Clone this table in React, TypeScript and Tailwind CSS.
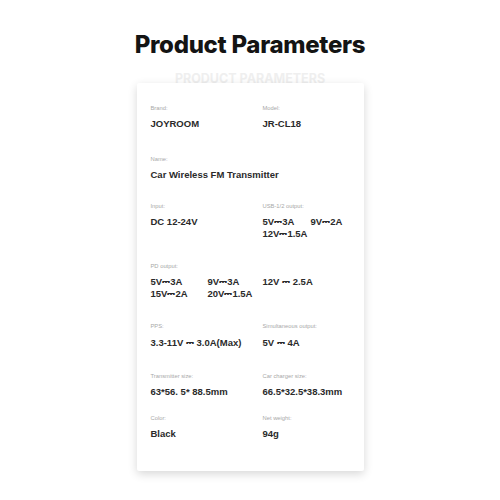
import React from "react";

const DC = "\u2393";

const Label: React.FC<{ children: React.ReactNode }> = ({ children }) => (
  <div className="text-[5.8px] leading-[8px] text-[#a8a8a8]">{children}</div>
);

const Value: React.FC<{ children: React.ReactNode; extra?: boolean }> = ({ children, extra }) => (
  <div className={`${extra ? "mt-[7px]" : "mt-[6px]"} text-[9.5px] leading-[12px] font-bold text-[#2a2a2a]`}>
    {children}
  </div>
);

const Sym = () => <span className="font-normal">{DC}</span>;

export default function App() {
  return (
    <div className="w-[500px] h-[500px] bg-white flex flex-col items-center pt-[30px] [font-family:'Liberation_Sans','DejaVu_Sans',sans-serif]">
      <h1 className="text-[24px] leading-[30px] font-extrabold tracking-[-0.3px] text-[#141414] [font-family:Inter,sans-serif]">
        Product Parameters
      </h1>
      <div className="mt-[11px] text-[12.5px] leading-[16px] font-bold text-[#efefef] [font-family:Inter,sans-serif]">
        PRODUCT PARAMETERS
      </div>
      <div className="relative z-10 -mt-[4px] w-[227px] h-[388px] bg-white rounded-[2px] shadow-[0_3px_10px_rgba(0,0,0,0.16)] pl-[14px] pt-[21px]">
        <div className="grid grid-cols-[112px_1fr]">
          <div>
            <Label>Brand:</Label>
            <Value>JOYROOM</Value>
          </div>
          <div>
            <Label>Model:</Label>
            <Value>JR-CL18</Value>
          </div>
        </div>

        <div className="mt-[25px]">
          <Label>Name:</Label>
          <Value>Car Wireless FM Transmitter</Value>
        </div>

        <div className="mt-[21px] grid grid-cols-[112px_1fr]">
          <div>
            <Label>Input:</Label>
            <Value>DC 12-24V</Value>
          </div>
          <div>
            <Label>USB-1/2 output:</Label>
            <Value>
              <span className="inline-block w-[48px]">5V<Sym />3A</span>
              <span>9V<Sym />2A</span>
              <br />
              12V<Sym />1.5A
            </Value>
          </div>
        </div>

        <div className="mt-[22px]">
          <Label>PD output:</Label>
          <Value>
            <div className="flex">
              <span className="w-[57px]">5V<Sym />3A</span>
              <span className="w-[55px]">9V<Sym />3A</span>
              <span>12V <Sym /> 2.5A</span>
            </div>
            <div className="flex">
              <span className="w-[57px]">15V<Sym />2A</span>
              <span>20V<Sym />1.5A</span>
            </div>
          </Value>
        </div>

        <div className="mt-[22px] grid grid-cols-[112px_1fr]">
          <div>
            <Label>PPS:</Label>
            <Value extra>3.3-11V <Sym /> 3.0A(Max)</Value>
          </div>
          <div>
            <Label>Simultaneous output:</Label>
            <Value extra>5V <Sym /> 4A</Value>
          </div>
        </div>

        <div className="mt-[23px] grid grid-cols-[112px_1fr]">
          <div>
            <Label>Transmitter size:</Label>
            <Value>63*56. 5* 88.5mm</Value>
          </div>
          <div>
            <Label>Car charger size:</Label>
            <Value>66.5*32.5*38.3mm</Value>
          </div>
        </div>

        <div className="mt-[16px] grid grid-cols-[112px_1fr]">
          <div>
            <Label>Color:</Label>
            <Value>Black</Value>
          </div>
          <div>
            <Label>Net weight:</Label>
            <Value>94g</Value>
          </div>
        </div>
      </div>
    </div>
  );
}
